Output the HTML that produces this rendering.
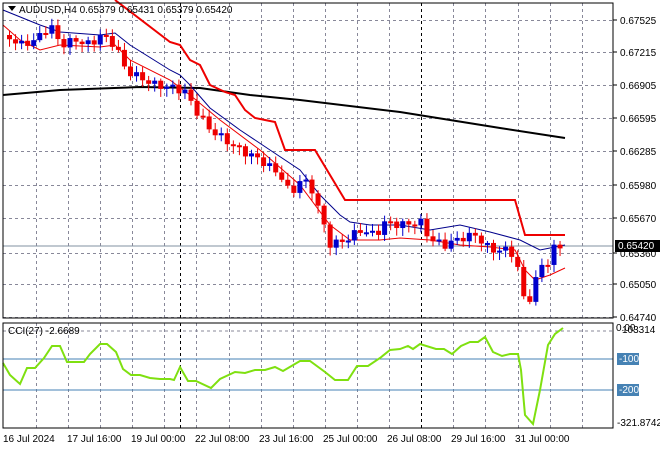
<!DOCTYPE html><html><head><meta charset="utf-8"><style>
body{margin:0;background:#fff;width:660px;height:450px;overflow:hidden;font-family:"Liberation Sans",sans-serif}
svg text{font-family:"Liberation Sans",sans-serif;font-size:10px;fill:#000}
</style></head><body>
<svg id="s" width="660" height="450" xmlns="http://www.w3.org/2000/svg">
<rect width="660" height="450" fill="#fff"/>
<g id="grid"></g>
<line x1="180.5" y1="3" x2="180.5" y2="318" stroke="#000" stroke-dasharray="3,3"/>
<line x1="180.5" y1="323" x2="180.5" y2="428" stroke="#000" stroke-dasharray="3,3"/>
<line x1="3" y1="246" x2="613" y2="246" stroke="#8090a0" stroke-width="1"/>
<polyline fill="none" stroke="#000" stroke-width="2" points="3,95 60,90 140,87 200,88 250,95 300,100 400,112 450,120 500,128 565,138"/>
<polyline fill="none" stroke="#e00" stroke-width="2" points="115,0 170,42 180,45 190,60 200,65 210,85 225,92 235,95 245,110 255,118 265,120 275,122 285,150 315,150 345,200 515,200 525,235 565,235"/>
<polyline fill="none" stroke="#00008b" stroke-width="1" points="3,10 40,25 60,32 100,35 115,33 130,45 170,70 180,75 190,85 210,108 240,130 270,150 300,170 320,195 340,215 350,222 370,225 400,225 430,230 460,225 490,232 520,240 540,250 550,248 565,245"/>
<polyline fill="none" stroke="#e00" stroke-width="1" points="3,25 20,40 40,50 60,45 100,47 115,45 130,60 170,80 190,95 220,120 260,150 300,185 330,225 350,240 380,240 400,238 430,240 460,245 490,247 515,250 525,270 535,280 550,275 565,268"/>
<g id="c"></g>
<line x1="3" y1="359" x2="613" y2="359" stroke="#4682b4"/>
<line x1="3" y1="390" x2="613" y2="390" stroke="#4682b4"/>
<polyline fill="none" stroke="#7fe010" stroke-width="2" points="3,363 10,375 20,384 27,368 35,368 44,358 52,346 60,346 67,362 84,362 90,354 100,344 107,344 116,352 123,369 131,375 140,375 150,378 160,379 170,379 174,380 180,367 188,381 196,381 211,388 220,379 235,372 245,373 255,370 265,370 275,367 283,371 300,361 310,361 325,372 335,380 348,380 357,366 368,366 380,358 390,350 400,349 408,346 413,349 420,344 436,349 444,349 452,354 461,346 470,342 478,342 485,337 493,352 502,356 510,354 518,354 521,370 525,415 533,424 540,390 548,345 555,334 563,328"/>
<rect x="3" y="3" width="610" height="315" fill="none" stroke="#000"/>
<rect x="3" y="323" width="610" height="105" fill="none" stroke="#000"/>
<path d="M8,6 L16,6 L12,11Z" fill="#000"/>
<text x="19" y="13">AUDUSD,H4  0.65379 0.65431 0.65379 0.65420</text>
<text x="8" y="334">CCI(27) -2.6689</text>
<g id="ax"></g>
<rect x="615" y="240" width="45" height="12" fill="#000"/>
<text x="618" y="249" style="fill:#fff">0.65420</text>
<rect x="617" y="353" width="22" height="12" fill="#4682b4"/><text x="619" y="362" style="fill:#fff">-100</text>
<rect x="617" y="384" width="22" height="12" fill="#4682b4"/><text x="619" y="393" style="fill:#fff">-200</text>
<text x="616" y="331">0.00</text><text x="622" y="333">103314</text>
<text x="617" y="426">-321.8742</text>
</svg>
<script>
(function(){
var NS="http://www.w3.org/2000/svg",g=document.getElementById('grid'),c=document.getElementById('c'),ax=document.getElementById('ax');
function el(p,t,a){var e=document.createElementNS(NS,t);for(var k in a)e.setAttribute(k,a[k]);p.appendChild(e);return e;}
for(var x=36;x<612;x+=32.1){var xx=Math.round(x)+.5,blk=(Math.abs(xx-421.5)<6);
el(g,'line',{x1:xx,y1:3,x2:xx,y2:318,stroke:blk?'#000':'#889',"stroke-dasharray":"3,3"});
el(g,'line',{x1:xx,y1:323,x2:xx,y2:428,stroke:blk?'#000':'#889',"stroke-dasharray":"3,3"});}
var ys=[20,52,85,118,151,185,218,253,284,317],ls=["0.67525","0.67215","0.66905","0.66595","0.66285","0.65980","0.65670","0.65360","0.65050","0.64740"];
ys.forEach(function(y,i){el(g,'line',{x1:3,y1:y+.5,x2:613,y2:y+.5,stroke:'#889',"stroke-dasharray":"3,3"});var t=el(ax,'text',{x:620,y:y+4});t.textContent=ls[i];el(ax,'line',{x1:613,y1:y,x2:617,y2:y,stroke:'#000'});});
el(g,'line',{x1:3,y1:331,x2:613,y2:331,stroke:'#889',"stroke-dasharray":"3,3"});
var d=[["16 Jul 2024",3],["17 Jul 16:00",67],["19 Jul 00:00",131],["22 Jul 08:00",195],["23 Jul 16:00",259],["25 Jul 00:00",323],["26 Jul 08:00",387],["29 Jul 16:00",451],["31 Jul 00:00",515]];
d.forEach(function(a){var t=el(ax,'text',{x:a[1],y:442});t.textContent=a[0];});
var kp=[[5,35],[20,45],[35,40],[50,25],[60,45],[75,40],[90,45],[100,35],[115,45],[125,70],[140,78],[155,85],[175,88],[185,92],[195,110],[210,130],[225,140],[240,150],[260,160],[280,175],[290,195],[300,180],[310,185],[320,215],[330,245],[345,240],[360,230],[375,235],[385,222],[400,225],[420,222],[430,240],[445,245],[460,238],[475,235],[490,250],[505,250],[515,255],[522,298],[530,298],[540,265],[548,262],[555,245],[565,247]];
function f(x){for(var i=1;i<kp.length;i++)if(x<=kp[i][0]){var a=kp[i-1],b=kp[i];return a[1]+(b[1]-a[1])*(x-a[0])/(b[0]-a[0]);}return 247;}
var prev=f(5);
for(var x=9;x<=565;x+=6.05){var cl=f(x)+Math.sin(x*1.7)*4,op=prev,up=cl<op,col=up?'#0000cc':'#ee0000',tp=Math.min(op,cl),bt=Math.max(op,cl);if(bt-tp<2)bt=tp+2;
el(c,'line',{x1:x+.5,y1:tp-2-Math.abs(Math.sin(x))*5,x2:x+.5,y2:bt+2+Math.abs(Math.cos(x))*6,stroke:col});
el(c,'rect',{x:x-2,y:tp,width:5,height:bt-tp,fill:col});prev=cl;}
})();
</script>
</body></html>
